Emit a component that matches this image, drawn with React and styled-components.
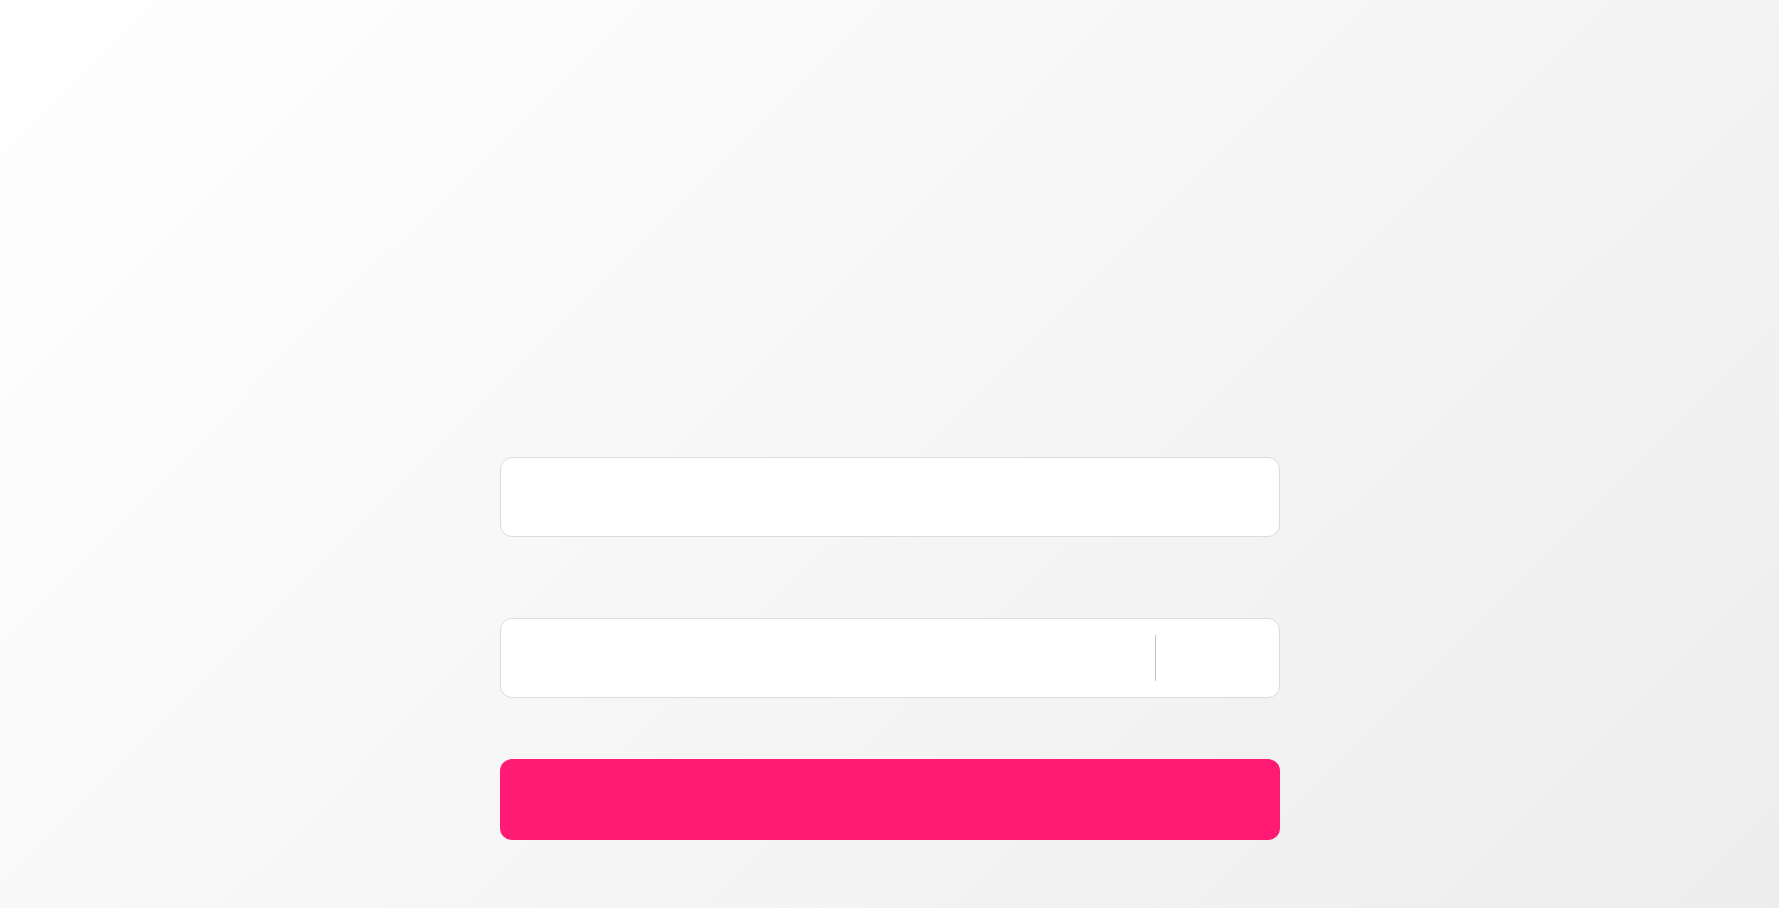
import React from "react";
import styled, { createGlobalStyle } from "styled-components";

const Global = createGlobalStyle`
  html, body { margin: 0; padding: 0; }
  body {
    font-family: "Noto Sans", "Liberation Sans", sans-serif;
    background: linear-gradient(135deg, #ffffff 0%, #ededed 100%);
    min-height: 908px;
  }
  * { box-sizing: border-box; }
`;

const Page = styled.div`
  width: 100%;
  height: 908px;
  display: flex;
  justify-content: center;
  padding-top: 457px;
`;

const Form = styled.form`
  width: 780px;
  display: flex;
  flex-direction: column;
`;

const Field = styled.div`
  height: 80px;
  background: #ffffff;
  border: 1px solid #dcdcdc;
  border-radius: 12px;
  display: flex;
  align-items: center;
  margin-bottom: ${(p) => p.$gap}px;
`;

const Input = styled.input`
  flex: 1;
  height: 100%;
  border: none;
  outline: none;
  background: transparent;
  padding: 0 20px;
  font-size: 18px;
  font-family: inherit;
`;

const Divider = styled.span`
  width: 1px;
  height: 46px;
  background: #c4c4c4;
`;

const Suffix = styled.div`
  width: 123px;
  height: 100%;
`;

const Submit = styled.button`
  height: 81px;
  border: none;
  border-radius: 12px;
  background: #ff1b74;
  cursor: pointer;
`;

export default function App() {
  return (
    <>
      <Global />
      <Page>
        <Form onSubmit={(e) => e.preventDefault()}>
          <Field $gap={81}>
            <Input type="text" aria-label="field one" />
          </Field>
          <Field $gap={61}>
            <Input type="password" aria-label="field two" />
            <Divider />
            <Suffix />
          </Field>
          <Submit type="submit" aria-label="submit" />
        </Form>
      </Page>
    </>
  );
}
